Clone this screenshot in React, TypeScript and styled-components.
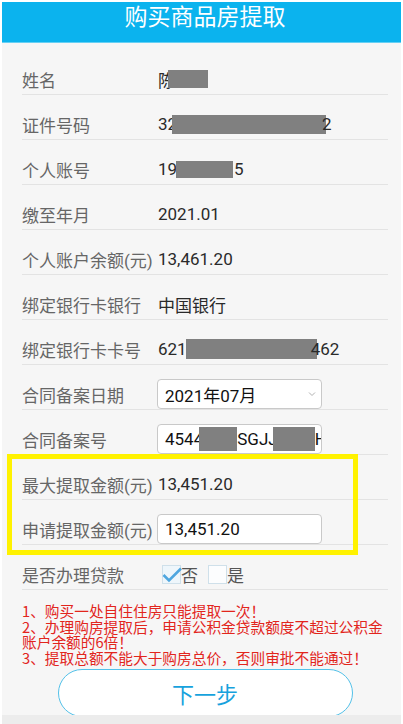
import styled, { createGlobalStyle } from "styled-components";

const GlobalStyle = createGlobalStyle`
  html, body {
    margin: 0;
    padding: 0;
    background: #fff;
  }
  body {
    font-family: Roboto, "Noto Sans CJK SC", sans-serif;
  }
`;

const Screen = styled.div`
  height: 724px;
  box-sizing: border-box;
  padding: 2px 2px 0;
  display: flex;
  flex-direction: column;
  overflow: hidden;
`;

const Header = styled.header`
  flex-shrink: 0;
  height: 40px;
  background: #0bb3ee;
  border-bottom: 1px solid #66d0f4;
  color: #fff;
  font-family: "Noto Sans CJK SC", sans-serif;
  font-size: 23px;
  line-height: 27px;
  text-align: center;
  padding-left: 7px;
`;

const Content = styled.main`
  flex: 1;
  min-height: 0;
  overflow: hidden;
  background: #f6f6f6;
  padding: 7px 13px 0 20px;
`;

const Footer = styled.div`
  flex-shrink: 0;
  height: 9px;
  background: #ececec;
`;

const Row = styled.div`
  display: flex;
  align-items: center;
  min-height: 30px;
  padding-top: 14px;
  border-bottom: 1px solid #e3e3e3;
  font-size: 17px;
`;

const Label = styled.span`
  width: 136px;
  flex-shrink: 0;
  color: #666;
  white-space: nowrap;
`;

const Value = styled.span`
  display: flex;
  align-items: center;
  color: #2a2a2a;
  white-space: nowrap;
`;

const Mask = styled.span<{ $w: number; $h: number; $ml?: number }>`
  display: inline-block;
  flex-shrink: 0;
  width: ${(p) => p.$w}px;
  height: ${(p) => p.$h}px;
  margin-left: ${(p) => p.$ml ?? 0}px;
  background: #808080;
`;

const Tail = styled.span<{ $ml?: number }>`
  margin-left: ${(p) => p.$ml ?? 0}px;
`;

const Field = styled.div`
  width: 165px;
  height: 30px;
  box-sizing: border-box;
  margin-left: -1px;
  padding: 0 5px 0 7px;
  display: flex;
  align-items: center;
  border: 1px solid #c9c9c9;
  border-radius: 4px;
  background: #fff;
  color: #111;
  white-space: nowrap;
  overflow: hidden;
`;

const Chevron = styled.svg`
  margin-left: auto;
  flex-shrink: 0;
`;

const Highlight = styled.div`
  position: relative;
  &::after {
    content: "";
    position: absolute;
    left: -15px;
    right: 30px;
    top: -1px;
    bottom: -10px;
    border: 5px solid #fff200;
    pointer-events: none;
  }
`;

const Options = styled.div`
  display: flex;
  align-items: center;
  margin-left: 4px;
  color: #555;
  font-family: "Noto Sans CJK SC", sans-serif;
`;

const Box = styled.span<{ $checked?: boolean }>`
  position: relative;
  display: inline-block;
  width: 19px;
  height: 19px;
  box-sizing: border-box;
  border: 1px solid #cfe0ea;
  background: ${(p) => (p.$checked ? "#eef6fb" : "#fcfdfe")};
`;

const Option = styled.span`
  margin-right: 10px;
  line-height: 19px;
`;

const Notes = styled.div`
  margin-top: 13px;
  color: #e2251c;
  font-family: "Noto Sans CJK SC", sans-serif;
  font-size: 14.7px;
  line-height: 15.5px;
`;

const NextButton = styled.button`
  display: block;
  width: 295px;
  height: 48px;
  margin: 4px auto 0;
  box-sizing: border-box;
  border: 1.5px solid #53c1e9;
  border-radius: 24px;
  background: #fff;
  color: #17a2dd;
  font-family: "Noto Sans CJK SC", sans-serif;
  font-size: 22px;
  padding: 0;
`;

export default function App() {
  return (
    <>
      <GlobalStyle />
      <Screen>
        <Header>购买商品房提取</Header>
        <Content>
          <Row>
            <Label>姓名</Label>
            <Value>
              陈<Mask $w={40} $h={18} $ml={-7} />
            </Value>
          </Row>
          <Row>
            <Label>证件号码</Label>
            <Value>
              32<Mask $w={154} $h={19} $ml={-5} />
              <Tail $ml={-4}>2</Tail>
            </Value>
          </Row>
          <Row>
            <Label>个人账号</Label>
            <Value>
              19<Mask $w={57} $h={17} $ml={-1} />
              <Tail $ml={1}>5</Tail>
            </Value>
          </Row>
          <Row>
            <Label>缴至年月</Label>
            <Value>2021.01</Value>
          </Row>
          <Row>
            <Label>个人账户余额(元)</Label>
            <Value>13,461.20</Value>
          </Row>
          <Row>
            <Label>绑定银行卡银行</Label>
            <Value>中国银行</Value>
          </Row>
          <Row>
            <Label>绑定银行卡卡号</Label>
            <Value>
              621<Mask $w={131} $h={20} $ml={-1} />
              <Tail $ml={-6}>462</Tail>
            </Value>
          </Row>
          <Row>
            <Label>合同备案日期</Label>
            <Field>
              2021年07月
              <Chevron width="8" height="6" viewBox="0 0 8 6">
                <polyline points="1,1.5 4,4.5 7,1.5" fill="none" stroke="#b0b0b0" strokeWidth="1" />
              </Chevron>
            </Field>
          </Row>
          <Row>
            <Label>合同备案号</Label>
            <Field>
              4544<Mask $w={38} $h={24} $ml={-4} />
              SGJJ<Mask $w={42} $h={24} $ml={-5} />
              <Tail $ml={0}>HI</Tail>
            </Field>
          </Row>
          <Highlight>
            <Row>
              <Label>最大提取金额(元)</Label>
              <Value>13,451.20</Value>
            </Row>
            <Row>
              <Label>申请提取金额(元)</Label>
              <Field>13,451.20</Field>
            </Row>
          </Highlight>
          <Row>
            <Label>是否办理贷款</Label>
            <Options>
              <Box $checked>
                <svg width="21" height="17" viewBox="0 0 21 17" style={{ position: "absolute", left: -1, top: 1 }}>
                  <polyline points="1.5,8 7,13.5 19,1.5" fill="none" stroke="#4ea6df" strokeWidth="2.6" />
                </svg>
              </Box>
              <Option>否</Option>
              <Box />
              <Option>是</Option>
            </Options>
          </Row>
          <Notes>
            <div>1、购买一处自住住房只能提取一次！</div>
            <div>2、办理购房提取后，申请公积金贷款额度不超过公积金账户余额的6倍！</div>
            <div>3、提取总额不能大于购房总价，否则审批不能通过！</div>
          </Notes>
          <NextButton>下一步</NextButton>
        </Content>
        <Footer />
      </Screen>
    </>
  );
}
